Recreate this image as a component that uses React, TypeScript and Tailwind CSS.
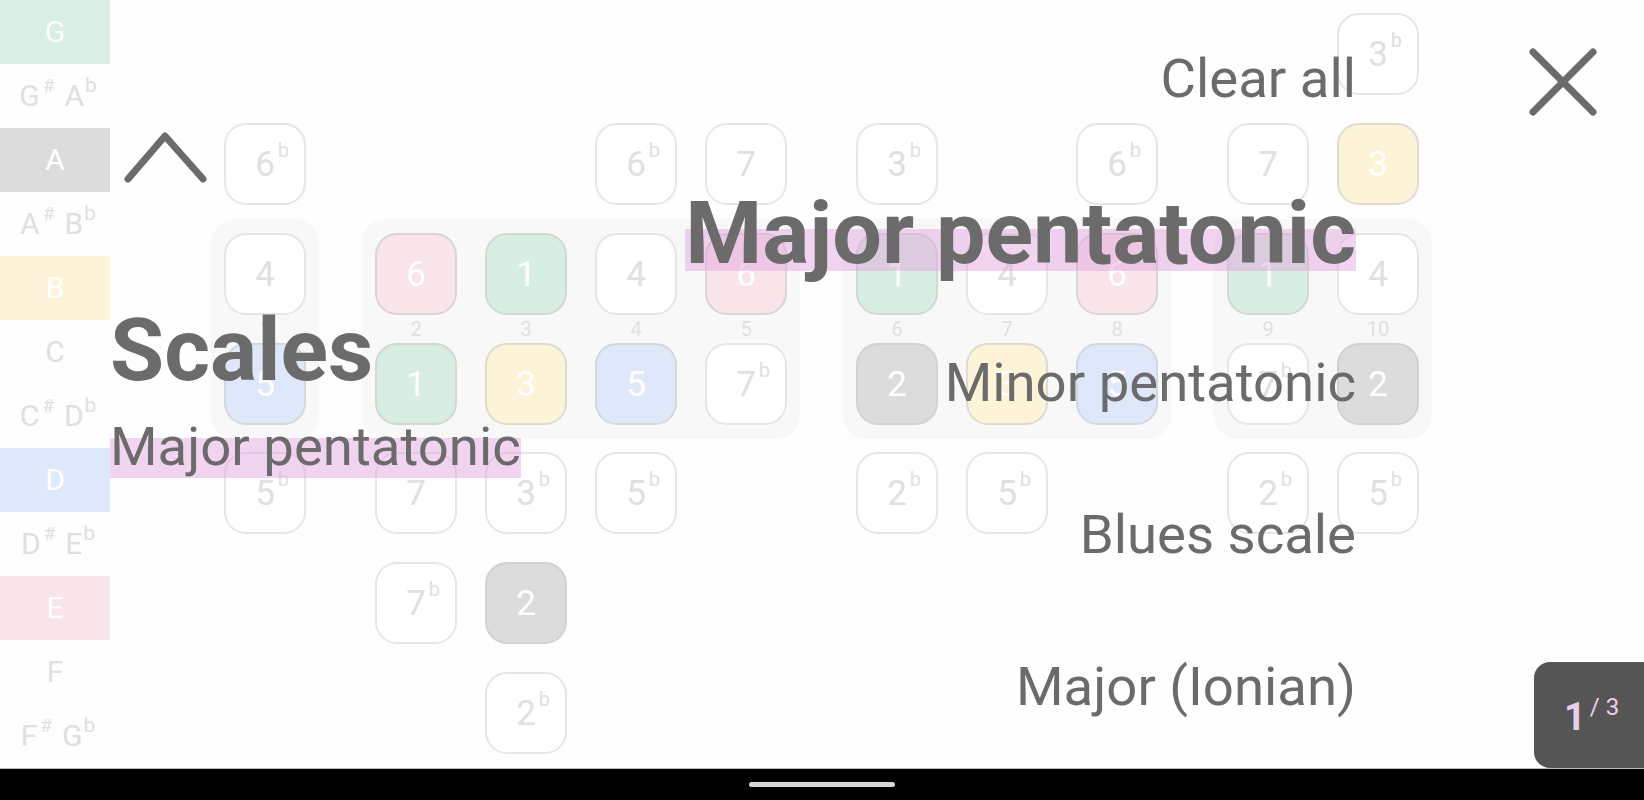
import React from "react";

type Tone = "pink" | "green" | "yellow" | "blue" | "gray" | "none";

const toneClass: Record<Tone, string> = {
  pink: "bg-[#f8e4e9] border-[#dad4d6] text-white",
  green: "bg-[#d9eee2] border-[#d2d8d4] text-white",
  yellow: "bg-[#fdf3d7] border-[#dedbd2] text-white",
  blue: "bg-[#dfe8fa] border-[#d3d7de] text-white",
  gray: "bg-[#dcdcdc] border-[#d2d2d2] text-white",
  none: "bg-white border-[#e6e6e6] text-[#e0e0e0]",
};

// "6b" = flat six, "6:pink" = coloured degree, "" = empty slot
type Column = { fret: string; top: string[]; mid: string[]; bottom: string[] };

const groups: Column[][] = [
  [{ fret: "1", top: ["", "6b"], mid: ["4", "5:blue"], bottom: ["5b", "", ""] }],
  [
    { fret: "2", top: ["", ""], mid: ["6:pink", "1:green"], bottom: ["7", "7b", ""] },
    { fret: "3", top: ["", ""], mid: ["1:green", "3:yellow"], bottom: ["3b", "2:gray", "2b"] },
    { fret: "4", top: ["", "6b"], mid: ["4", "5:blue"], bottom: ["5b", "", ""] },
    { fret: "5", top: ["", "7"], mid: ["6:pink", "7b"], bottom: ["", "", ""] },
  ],
  [
    { fret: "6", top: ["", "3b"], mid: ["1:green", "2:gray"], bottom: ["2b", "", ""] },
    { fret: "7", top: ["", ""], mid: ["4", "3:yellow"], bottom: ["5b", "", ""] },
    { fret: "8", top: ["", "6b"], mid: ["6:pink", "5:blue"], bottom: ["", "", ""] },
  ],
  [
    { fret: "9", top: ["", "7"], mid: ["1:green", "7b"], bottom: ["2b", "", ""] },
    { fret: "10", top: ["3b", "3:yellow"], mid: ["4", "2:gray"], bottom: ["5b", "", ""] },
  ],
];

const notes = [
  { a: "G", bg: "bg-[#d9efe3]" },
  { a: "G", s: "#", b: "A", t: "b" },
  { a: "A", bg: "bg-[#dcdcdc]" },
  { a: "A", s: "#", b: "B", t: "b" },
  { a: "B", bg: "bg-[#fdf3d8]" },
  { a: "C" },
  { a: "C", s: "#", b: "D", t: "b" },
  { a: "D", bg: "bg-[#dfe9fb]" },
  { a: "D", s: "#", b: "E", t: "b" },
  { a: "E", bg: "bg-[#f9e4e9]" },
  { a: "F" },
  { a: "F", s: "#", b: "G", t: "b" },
];

const Cell = ({ spec }: { spec: string }) => {
  if (!spec) return <div className="w-[82px] h-[82px]" />;
  const [deg, tone] = spec.split(":");
  const flat = deg.endsWith("b");
  const digit = flat ? deg.slice(0, -1) : deg;
  return (
    <div
      className={`w-[82px] h-[82px] rounded-[22px] border-2 flex items-center justify-center ${toneClass[(tone as Tone) || "none"]}`}
    >
      <span className="relative text-[35px] leading-none">
        {digit}
        {flat && <span className="absolute left-full -top-[7px] ml-[3px] text-[20px] leading-none">b</span>}
      </span>
    </div>
  );
};

const Group = ({ cols }: { cols: Column[] }) => (
  <div className="flex flex-col">
    <div className="flex gap-[28px] px-[13px] pt-[13px]">
      {cols.map((c, i) => (
        <div key={i} className="flex flex-col gap-[28px]">
          {c.top.map((s, j) => (
            <Cell key={j} spec={s} />
          ))}
        </div>
      ))}
    </div>
    <div className="mt-[14px] flex gap-[28px] px-[13px] py-[14px] rounded-[24px] bg-[#f8f8f8]">
      {cols.map((c, i) => (
        <div key={i} className="flex flex-col">
          <Cell spec={c.mid[0]} />
          <div className="h-[28px] flex items-center justify-center text-[20px] leading-none text-[#e0e0e0]">
            {c.fret}
          </div>
          <Cell spec={c.mid[1]} />
        </div>
      ))}
    </div>
    <div className="mt-[13px] flex gap-[28px] px-[13px]">
      {cols.map((c, i) => (
        <div key={i} className="flex flex-col gap-[28px]">
          {c.bottom.map((s, j) => (
            <Cell key={j} spec={s} />
          ))}
        </div>
      ))}
    </div>
  </div>
);

const Sidebar = () => (
  <div className="w-[110px] flex flex-col shrink-0">
    {notes.map((n, i) => (
      <div
        key={i}
        className={`h-[64px] flex items-center justify-center text-[30px] leading-none ${n.bg ? `${n.bg} text-white` : "text-[#e0e0e0]"}`}
      >
        {n.s ? (
          <span className="pl-[6px]">
            {n.a}
            <span className="relative -top-[14px] ml-[3px] text-[19px]">{n.s}</span>
            <span className="ml-[10px]">{n.b}</span>
            <span className="relative -top-[14px] ml-[1px] text-[21px]">{n.t}</span>
          </span>
        ) : (
          <span>{n.a}</span>
        )}
      </div>
    ))}
  </div>
);

const App = () => {
  return (
    <div className="relative w-[1644px] h-[800px] overflow-hidden bg-[#fefefe] font-[Roboto,sans-serif] flex flex-col">
      <div className="flex h-[768px]">
        <Sidebar />
        <div className="flex gap-[43px] pl-[101px]">
          {groups.map((g, i) => (
            <Group key={i} cols={g} />
          ))}
        </div>
      </div>
      <div className="h-[32px] bg-black border-t border-[#bdbdbd] flex items-center justify-center">
        <div className="w-[146px] h-[5px] rounded-full bg-[#d6d6d6]" />
      </div>

      {/* scale picker overlay */}
      <div className="absolute top-0 left-0 w-[1644px] h-[768px] flex text-[#6b6b6b]">
        <div className="flex-1 pl-[110px] flex flex-col items-start">
          <svg className="ml-[13px] mt-[128px]" width="86" height="60" viewBox="0 0 86 60">
            <polyline
              points="5,51 42,8 80,51"
              fill="none"
              stroke="#6b6b6b"
              strokeWidth="7"
              strokeLinecap="round"
              strokeLinejoin="round"
            />
          </svg>
          <div className="mt-[112px] text-[88px] leading-[100px] font-bold">Scales</div>
          <div className="mt-[14px] text-[54.5px] leading-[64px] bg-[linear-gradient(to_bottom,transparent_24px,rgba(226,160,222,0.45)_24px)]">
            Major pentatonic
          </div>
        </div>
        <div className="flex flex-col items-end pt-[46px] text-[54.5px] leading-[64px]">
          <span>Clear all</span>
          <span className="mt-[73px] text-[88px] leading-[100px] font-bold bg-[linear-gradient(to_bottom,transparent_46px,rgba(226,160,222,0.45)_46px,rgba(226,160,222,0.45)_88px,transparent_88px)]">
            Major pentatonic
          </span>
          <span className="mt-[67px]">Minor pentatonic</span>
          <span className="mt-[88px]">Blues scale</span>
          <span className="mt-[88px]">Major (Ionian)</span>
        </div>
        <div className="w-[288px] flex flex-col items-end">
          <svg className="mt-[47px] mr-[46px]" width="70" height="70" viewBox="0 0 70 70">
            <path d="M5 5 L65 65 M65 5 L5 65" stroke="#6b6b6b" strokeWidth="7" strokeLinecap="round" />
          </svg>
          <div className="mt-auto w-[110px] h-[106px] rounded-l-[16px] bg-[#555555] flex items-start pl-[30px] pt-[36px] text-[#e9cfe9]">
            <span className="text-[38px] leading-none font-bold">1</span>
            <span className="-mt-[3px] ml-[4px] text-[24px] leading-none">/ 3</span>
          </div>
        </div>
      </div>
    </div>
  );
};

export default App;
